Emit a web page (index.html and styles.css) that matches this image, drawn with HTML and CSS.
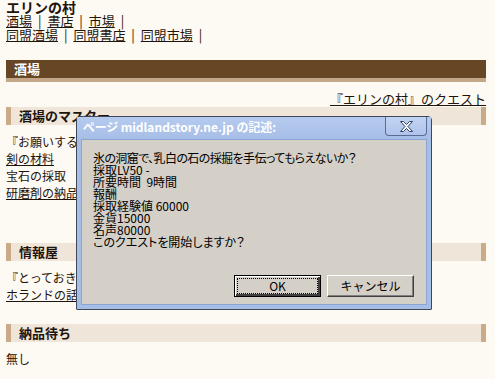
FILE: index.html
```html
<!DOCTYPE html>
<html lang="ja">
<head>
  <meta charset="UTF-8" />
  <title>エリンの村 - 酒場</title>
  <link rel="stylesheet" href="styles.css">
</head>
<body>

  <div class="head">
    <div class="village">エリンの村</div>
    <div class="menu"><a href="#">酒場</a> <span class="sep">|</span> <a href="#">書店</a> <span class="sep">|</span> <a href="#">市場</a> <span class="sep">|</span></div>
    <div class="menu"><a href="#">同盟酒場</a> <span class="sep">|</span> <a href="#">同盟書店</a> <span class="sep">|</span> <a href="#">同盟市場</a> <span class="sep">|</span></div>
  </div>

  <h2 class="bar">酒場</h2>

  <div class="quest-link"><a href="#">『エリンの村』のクエスト</a></div>

  <div class="section first">
    <h3 class="sub">酒場のマスター</h3>
    <p>『お願いすることがあるんだが、聞いてくれるか？』<br>
      <a href="#">剣の材料 </a><br>
      宝石の採取<br>
      <a href="#">研磨剤の納品</a></p>
  </div>

  <div class="section">
    <h3 class="sub">情報屋</h3>
    <p>『とっておきの話があるんだ、聞いていくかい？』<br>
      <a href="#">ホランドの話</a></p>
  </div>

  <div class="section">
    <h3 class="sub">納品待ち</h3>
    <p>無し</p>
  </div>

  <!-- confirm() ダイアログ -->
  <div class="dialog">
    <div class="titlebar">
      <span class="title">ページ midlandstory.ne.jp の記述:</span>
      <span class="close">
        <svg width="13" height="11" viewBox="0 0 13 11">
          <path d="M0.5 0.5H3.5L6.5 3.5L9.5 0.5H12.5L8 5.5L12.5 10.5H9.5L6.5 7.5L3.5 10.5H0.5L5 5.5Z" fill="#f4f7fd" stroke="#34425f" stroke-width="1"/>
        </svg>
      </span>
    </div>
    <div class="client">
      <div class="msg">
        <span class="long">氷の洞窟で、乳白の石の採掘を手伝ってもらえないか？</span><br>
        採取LV50 -<br>
        所要時間&nbsp;&nbsp;9時間<br>
        報酬<br>
        採取経験値 60000<br>
        金貨15000<br>
        名声80000<br>
        このクエストを開始しますか？
      </div>
      <div class="buttons">
        <button class="btn default"><span>OK</span></button>
        <button class="btn"><span>キャンセル</span></button>
      </div>
    </div>
  </div>

</body>
</html>
```

FILE: styles.css
```css
body {
  margin: 0;
  padding: 0 9px 0 6px;
  background: #fdf9f3;
  color: #1e140c;
  font-family: "Noto Sans CJK JP", "Noto Sans", sans-serif;
  font-size: 12px;
}

a {
  color: #1e140c;
  text-decoration: underline;
}

.head {
  font-size: 13px;
  line-height: 14px;
}

.village {
  font-size: 14px;
  font-weight: bold;
}

.sep {
  margin: 0 3px;
}

.bar {
  margin: 18px 0 0;
  height: 18px;
  line-height: 18px;
  padding-left: 8px;
  background: #674626;
  border-bottom: 4px solid #c4a789;
  color: #ffffff;
  font-size: 13px;
  font-weight: bold;
}

.quest-link {
  margin-top: 8px;
  text-align: right;
  font-size: 13px;
  line-height: 17px;
}

.section {
  margin-bottom: 21px;
}

.section.first {
  margin-bottom: 42px;
}

.sub {
  margin: 0;
  height: 18px;
  line-height: 18px;
  padding-left: 8px;
  background: #efe5d9;
  border-left: 5px solid #c9ab89;
  border-right: 5px solid #c9ab89;
  font-size: 13px;
  font-weight: bold;
}

.section p {
  margin: 8px 0 0;
  line-height: 17px;
}

/* ダイアログ */
.dialog {
  position: absolute;
  left: 76px;
  top: 116px;
  width: 344px;
  border: 1px solid #3f4858;
  border-radius: 4px 4px 1px 1px;
  background: #a6bde6;
  padding: 0 5px 5px;
}

.titlebar {
  display: flex;
  align-items: flex-start;
  height: 23px;
  margin: 0 -5px;
  padding-left: 6px;
  background: linear-gradient(#b6cbef, #a6bde6);
}

.title {
  flex: 1;
  padding-top: 3px;
  line-height: 14px;
  color: #ffffff;
  font-size: 12px;
  font-weight: bold;
  font-feature-settings: "palt";
}

.close {
  display: flex;
  align-items: center;
  justify-content: center;
  width: 40px;
  height: 18px;
  margin-right: 4px;
  border: 1px solid #5a6c8f;
  border-top: none;
  border-radius: 0 0 4px 4px;
  background: linear-gradient(#c3d4f2, #aec4ec);
}

.client {
  height: 164px;
  background: #d4d0c8;
  box-shadow: 0 0 0 1px #8aa4d3;
  display: flex;
  flex-direction: column;
}

.msg {
  padding: 12px 0 0 11px;
  line-height: 12px;
  font-size: 12px;
  color: #000000;
  font-feature-settings: "palt";
  white-space: nowrap;
}

.msg .long {
  letter-spacing: -0.6px;
}

.buttons {
  display: flex;
  justify-content: flex-end;
  gap: 6px;
  margin-top: 27px;
  padding-right: 12px;
}

.btn {
  width: 87px;
  height: 22px;
  padding: 0;
  background: #d4d0c8;
  border: 1px solid;
  border-color: #ffffff #404040 #404040 #ffffff;
  box-shadow: inset -1px -1px #808080;
  font-family: "Noto Sans CJK JP", sans-serif;
  font-size: 12px;
  color: #000000;
}

.btn span {
  display: block;
  line-height: 18px;
}

.btn.default {
  border: 1px solid #000000;
  box-shadow: inset 1px 1px #ffffff, inset -2px -2px #404040;
}

.btn.default span {
  margin: 2px 3px;
  line-height: 14px;
  outline: 1px dotted #000000;
}
```
